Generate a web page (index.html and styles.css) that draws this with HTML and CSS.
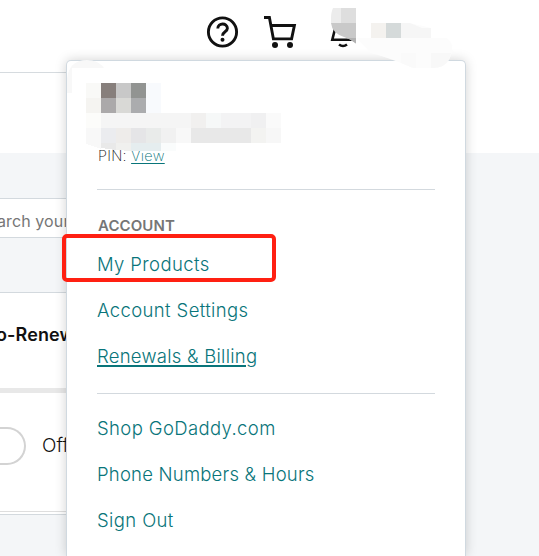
FILE: index.html
```html
<!DOCTYPE html>
<html lang="en">
<head>
<meta charset="utf-8">
<title>My Account</title>
<link rel="stylesheet" href="styles.css">
</head>
<body>
<div class="page">
  <header class="topbar">
    <svg class="icons" width="170" height="60" viewBox="200 0 170 60" fill="none" stroke="#111" stroke-width="2.9">
      <circle cx="222.5" cy="32" r="14.1"/>
      <path d="M217.8 28.6C217.8 22.6 227.4 22.6 227.4 28.3C227.4 32 222.5 31.6 222.5 35.8"/>
      <circle cx="222.5" cy="39.8" r="2" fill="#111" stroke="none"/>
      <path d="M264 17.5H269.4L273.4 38.9H291.6L294.4 25.5H271"/>
      <circle cx="275" cy="45" r="3" fill="#111" stroke="none"/>
      <circle cx="290" cy="45" r="3" fill="#111" stroke="none"/>
      <path d="M335.5 27L332.3 39.8H355.5" stroke-width="2.6"/>
      <path d="M339 44.5Q343 47.5 347 44.5" stroke-width="2.6"/>
      <path d="M331 23H356V43.5Q350 38.5 344 37Q332 33 331 23Z" fill="#c9c9c9" stroke="none"/>
      <path d="M341 8H356V23H341Z" fill="#dedede" stroke="none"/>
      <path d="M341 8V23H331V19Q331 12 333 8Z" fill="#ececec" stroke="none"/>
      <path d="M347 38H356V43.5Q352 40 347 38Z" fill="#b2b2b2" stroke="none"/>
    </svg>
  </header>
  <div class="subbar"><div class="rule"></div></div>
  <main class="content">
    <div class="search">arch your</div>
    <section class="card">
      <div class="card-head">o-Renew</div>
      <div class="card-row"><span class="toggle"></span><span class="off">Off</span></div>
    </section>
  </main>
</div>

<aside class="panel">
  <div class="user">
    <svg class="mosaic" width="195" height="68" viewBox="0 0 195 68" shape-rendering="crispEdges">
      <path fill="#f9f9f7" d="M0 0h15v15H0z"/><path fill="#877f7c" d="M15 0h15v15H15z"/><path fill="#c8c8c8" d="M30 0h15v15H30z"/><path fill="#929492" d="M45 0h15v15H45z"/><path fill="#f8fafd" d="M60 0h15v30H60z"/>
      <path fill="#f5f4f1" d="M0 15h15v15H0z"/><path fill="#aba9aa" d="M15 15h15v15H15z"/><path fill="#d9d9d6" d="M30 15h15v15H30z"/><path fill="#abacae" d="M45 15h15v15H45z"/>
      <path fill="#fcfcfa" d="M0 30h15v15H0z"/><path fill="#f5f5f5" d="M15 30h90v15H15z"/><path fill="#f1f0ef" d="M105 30h15v15h-15z"/><path fill="#f6f8f8" d="M120 30h15v15h-15z"/><path fill="#f3f3f4" d="M135 30h30v15h-30z"/><path fill="#f0f0f1" d="M165 30h15v15h-15z"/><path fill="#fafafa" d="M180 30h15v15h-15z"/>
      <path fill="#f8f8f8" d="M0 45h15v21L0 61z"/><path fill="#ebecef" d="M15 45h15v15H15z"/><path fill="#eeecea" d="M30 45h15v15H30z"/><path fill="#e5e5e7" d="M45 45h15v15H45z"/><path fill="#e9ebea" d="M60 45h15v15H60z"/><path fill="#f1f1f1" d="M75 45h15v15H75z"/><path fill="#f8f8f8" d="M90 45h15v15H90z"/><path fill="#e8e8e8" d="M105 45h60v15h-60z"/><path fill="#f3f3f1" d="M165 45h15v15h-15z"/><path fill="#f7f7f7" d="M180 45h15v15h-15z"/>
      <path fill="#e9e9e9" d="M15 60h15v7l-15-2z"/><path fill="#f0f0ee" d="M30 60h15v8l-15-1z"/><path fill="#e5edef" d="M45 60h30v8H45z"/><path fill="#fafcfc" d="M75 60h15v8H75z"/>
    </svg>
    <div class="pin"><span class="pin-label">PIN:</span> <a class="view">View</a></div>
  </div>
  <nav class="menu">
    <h2>ACCOUNT</h2>
    <a>My Products</a>
    <a>Account Settings</a>
    <a class="current">Renewals &amp; Billing</a>
  </nav>
  <nav class="menu more">
    <a>Shop GoDaddy.com</a>
    <a class="phone">Phone Numbers &amp; Hours</a>
    <a>Sign Out</a>
  </nav>
</aside>
<svg class="veil" width="100" height="50" viewBox="355 20 100 50">
  <path fill="#fcfcfc" d="M357 38H371V23H410L431 28V38H447Q455 45 451 55Q447 68 433 68H413Q390 58 371 53Z"/>
  <path fill="#f4f2ef" d="M371 23h15v15h-15z"/><path fill="#d5dada" d="M386 23h15v15h-15z"/>
  <path fill="#f6f6f6" d="M401 23H410L422 28H431V38H401z"/>
  <path fill="#f8f8f8" d="M431 53H451Q448 68 433 68H431z"/>
  <path fill="#fafafa" d="M401 53h15v15h-3L401 63z"/>
</svg>
<svg class="smudge" width="38" height="38" viewBox="0 0 38 38"><path fill="#f8f8f8" d="M0 33V19Q2 0 20 0Q31 0 37 8H5V33Z"/></svg>
<div class="highlight"></div>
</body>
</html>
```
FILE: styles.css
```css
* { box-sizing: border-box; }
html { height: 556px; overflow: hidden; }
body {
  margin: 0;
  width: 539px;
  height: 556px;
  overflow: hidden;
  position: relative;
  background: #f4f6f8;
  font-family: Inter, "Liberation Sans", sans-serif;
  color: #111;
}
.topbar { height: 72px; background: #fff; padding-left: 200px; }
.icons { display: block; }
.subbar { height: 81px; background: #fff; }
.rule { width: 420px; height: 1px; background: #d6dbdf; }
.content { padding-top: 45px; width: 420px; }
.search {
  height: 40px;
  border: 1px solid #d3d9de;
  border-left: 0;
  background: #fff;
  color: #767676;
  font-size: 16px;
  line-height: 45px;
  letter-spacing: 0.1px;
  white-space: nowrap;
  text-indent: -3px;
}
.card {
  margin-top: 54px;
  height: 223px;
  background: #fff;
  border-top: 1px solid #d3d9de;
  border-bottom: 1px solid #d3d9de;
}
.card-head {
  height: 100px;
  border-bottom: 5px solid #e8e8e8;
  font-size: 18px;
  font-weight: 600;
  line-height: 84px;
  letter-spacing: 0.1px;
  text-indent: -4px;
}
.card-row {
  display: flex;
  align-items: center;
  height: 119px;
  padding-bottom: 13px;
  border-bottom: 1px solid #dedede;
}
.toggle {
  width: 26px;
  height: 38px;
  border: 2px solid #d3d3d3;
  border-left: 0;
  border-radius: 0 19px 19px 0;
}
.off { margin-left: 16px; font-size: 19px; font-weight: 300; }
.panel {
  position: absolute;
  left: 66px;
  top: 60px;
  width: 400px;
  height: 496px;
  padding: 0 30px;
  background: #fff;
  border: 1px solid #d0d9e0;
  border-bottom: 0;
  border-radius: 5px 5px 0 0;
  box-shadow: 0 0 12px rgba(0, 0, 0, 0.18);
}
.user { height: 129px; padding-top: 22px; border-bottom: 1px solid #d3d9de; }
.mosaic { display: block; margin-left: -11px; position: relative; z-index: 1; }
.pin {
  margin-top: -4px;
  padding-left: 1px;
  font-size: 14.5px;
  font-weight: 250;
  line-height: 18px;
  letter-spacing: 0.25px;
}
.view {
  color: #09757a;
  text-decoration: underline;
  text-underline-offset: 2px;
}
.menu { height: 204px; padding-top: 26px; border-bottom: 1px solid #d3d9de; }
.menu h2 {
  margin: 0;
  padding-left: 1px;
  color: #767676;
  font-size: 15px;
  font-weight: 600;
  line-height: 20px;
  letter-spacing: 0.1px;
}
.menu h2 + a { margin-top: 5px; }
.menu a {
  display: block;
  height: 46px;
  line-height: 46px;
  color: #09757a;
  font-size: 18.5px;
  font-weight: 260;
  letter-spacing: 0.38px;
  white-space: nowrap;
}
.more { height: auto; padding-top: 11px; border: 0; }
.menu .current {
  letter-spacing: 0.25px;
  text-decoration: underline;
  text-decoration-thickness: 2px;
  text-underline-offset: 2px;
}
.menu .phone { letter-spacing: 0.21px; }
.veil { position: absolute; left: 355px; top: 20px; }
.smudge { position: absolute; left: 67px; top: 60px; }
.highlight {
  position: absolute;
  left: 62px;
  top: 234px;
  width: 214px;
  height: 48px;
  border: 4px solid #ff2012;
  border-radius: 5px;
}
```
